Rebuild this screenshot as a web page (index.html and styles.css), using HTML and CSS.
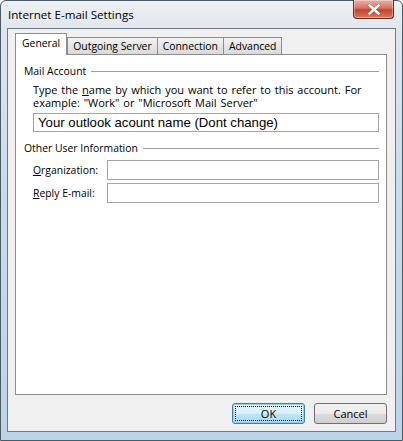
FILE: index.html
```html
<!DOCTYPE html>
<html>
<head>
<meta charset="utf-8">
<link rel="stylesheet" href="styles.css">
</head>
<body>
<div class="window">
  <div class="titlebar">
    <span class="title">Internet E-mail Settings</span>
    <div class="close">
      <svg width="14" height="11" viewBox="0 0 14 11"><path d="M2.5 1.5 L11.5 9.5 M11.5 1.5 L2.5 9.5" stroke="#7a2a20" stroke-width="3.6" stroke-linecap="square" opacity="0.35"/><path d="M2.5 1.5 L11.5 9.5 M11.5 1.5 L2.5 9.5" stroke="#fff" stroke-width="2.6" stroke-linecap="square"/></svg>
    </div>
  </div>
  <div class="client">
    <div class="tabs">
      <div class="tab active">General</div>
      <div class="tab">Outgoing Server</div>
      <div class="tab">Connection</div>
      <div class="tab">Advanced</div>
    </div>
    <div class="panel">
      <div class="group-title"><span>Mail Account</span><div class="rule"></div></div>
      <p class="desc">Type the <span class="ul">n</span>ame by which you want to refer to this account. For example: "Work" or "Microsoft Mail Server"</p>
      <div class="input big">Your outlook acount name (Dont change)</div>
      <div class="group-title"><span>Other User Information</span><div class="rule"></div></div>
      <div class="row first"><label><span class="ul">O</span>rganization:</label><div class="input"></div></div>
      <div class="row"><label><span class="ul">R</span>eply E-mail:</label><div class="input"></div></div>
    </div>
    <div class="buttons">
      <div class="btn default">OK</div>
      <div class="btn">Cancel</div>
    </div>
  </div>
</div>
</body>
</html>
```

FILE: styles.css
```css
html, body { margin: 0; padding: 0; }
body { width: 403px; height: 441px; overflow: hidden; font-family: "Open Sans", "DejaVu Sans", sans-serif; font-size: 10.4px; color: #000; }
.ul { text-decoration: underline; }
.window {
  width: 403px; height: 441px; box-sizing: border-box;
  background: linear-gradient(180deg, #eef1f3 0%, #dfe6ec 30px, #c7dbea 200px, #bcd4e8 100%);
  border: 1px solid #4a5a66;
  border-radius: 6px 6px 0 0;
  display: flex; flex-direction: column;
}
.titlebar { height: 27px; display: flex; align-items: flex-start; justify-content: space-between; padding: 0 7px 0 7px; }
.title { font-size: 11.6px; margin-top: 6px; color: #000; }
.close {
  width: 41px; height: 19px; margin-top: -1px; margin-right: 1px; box-sizing: border-box;
  border: 1px solid #6b2a24; border-top: none; border-radius: 0 0 4px 4px;
  background: linear-gradient(180deg, #eab0a3 0%, #d8735f 45%, #c4432b 55%, #d8795f 100%);
  box-shadow: inset 0 0 0 1px rgba(255,255,255,0.35);
  display: flex; align-items: center; justify-content: center;
}
.client {
  margin: 0 6px 0 6px; height: 404px; box-sizing: border-box;
  background: #f0f0f0; border: 1px solid #6d7b88;
  padding: 4px 8px 0 7px;
  display: flex; flex-direction: column;
}
.tabs { display: flex; align-items: flex-end; height: 21px; position: relative; z-index: 1; }
.tab {
  height: 17px; box-sizing: border-box; padding: 0 5px; line-height: 16px;
  border: 1px solid #8d8d8d; border-bottom: none; border-left: none;
  background: linear-gradient(180deg, #f2f2f2 0%, #e6e6e6 50%, #d9d9d9 100%);
}
.tab:nth-child(2) { border-left: 1px solid #8d8d8d; }
.tab.active { background: #fff; border-left: 1px solid #8d8d8d; padding: 0 6px; line-height: 19px; margin-bottom: -1px; height: 22px; }
.panel {
  height: 341px; box-sizing: border-box; background: #fff; border: 1px solid #8d8d8d;
  padding: 9px 7px 0 8px;
}
.group-title { display: flex; align-items: center; height: 14px; }
.group-title span { padding-right: 5px; }
.rule { flex: 1; border-top: 1px solid #a0a0a0; }
.desc { margin: 5px 0 0 9px; line-height: 13px; width: 345px; font-size: 11px; word-spacing: 1px; }
.input { border: 1px solid #a5a5a5; background: #fff; box-sizing: border-box; height: 19px; }
.input.big { margin: 4px 0 9px 9px; font-family: "Liberation Sans", Arial, sans-serif; font-size: 13.2px; line-height: 17px; padding-left: 4px; height: 19px; }
.row { display: flex; align-items: center; margin-left: 9px; margin-top: 3px; }
.row.first { margin-top: 5px; }
.row label { width: 74px; }
.row .input { flex: 1; height: 20px; }
.buttons { display: flex; justify-content: flex-end; gap: 9px; padding: 8px 0 0 0; }
.btn {
  width: 73px; height: 21px; box-sizing: border-box; border: 1px solid #707070; border-radius: 3px;
  background: linear-gradient(180deg, #f2f2f2 0%, #ebebeb 50%, #dddddd 51%, #cfcfcf 100%);
  display: flex; align-items: center; justify-content: center; font-size: 11px;
}
.btn.default {
  border-color: #3c7fb1;
  background: linear-gradient(180deg, #eaf6fd 0%, #d9f0fc 50%, #bee6fd 51%, #a7d9f5 100%);
  box-shadow: inset 0 0 0 1px #8fd1f4;
  outline: 1px dotted #000; outline-offset: -4px;
}
```
